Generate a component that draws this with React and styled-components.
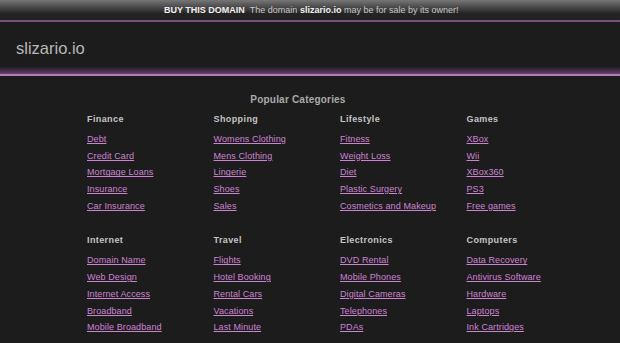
import React from 'react';
import styled, { createGlobalStyle } from 'styled-components';

const GlobalStyle = createGlobalStyle`
  html, body {
    margin: 0;
    padding: 0;
    background: #1c1c1c;
    font-family: "Liberation Sans", Arial, sans-serif;
  }
`;

const categories = [
  { title: 'Finance', links: ['Debt', 'Credit Card', 'Mortgage Loans', 'Insurance', 'Car Insurance'] },
  { title: 'Shopping', links: ['Womens Clothing', 'Mens Clothing', 'Lingerie', 'Shoes', 'Sales'] },
  { title: 'Lifestyle', links: ['Fitness', 'Weight Loss', 'Diet', 'Plastic Surgery', 'Cosmetics and Makeup'] },
  { title: 'Games', links: ['XBox', 'Wii', 'XBox360', 'PS3', 'Free games'] },
  { title: 'Internet', links: ['Domain Name', 'Web Design', 'Internet Access', 'Broadband', 'Mobile Broadband'] },
  { title: 'Travel', links: ['Flights', 'Hotel Booking', 'Rental Cars', 'Vacations', 'Last Minute'] },
  { title: 'Electronics', links: ['DVD Rental', 'Mobile Phones', 'Digital Cameras', 'Telephones', 'PDAs'] },
  { title: 'Computers', links: ['Data Recovery', 'Antivirus Software', 'Hardware', 'Laptops', 'Ink Cartridges'] }
];

export default function App () {
  return (
    <Page>
      <GlobalStyle />
      <TopBar>
        <Strong>BUY THIS DOMAIN</Strong>
        <Notice>The domain <b>slizario.io</b> may be for sale by its owner!</Notice>
      </TopBar>
      <Header>
        <Logo>slizario.io</Logo>
      </Header>
      <HeaderShade />
      <Main>
        <Title>Popular Categories</Title>
        <Grid>
          {
            categories.map((cat, index) => (
              <Column key={index} second={index >= 4}>
                <Heading>{ cat.title }</Heading>
                <List>
                  { cat.links.map(link => (
                    <li key={link}><Link href="#">{ link }</Link></li>
                  )) }
                </List>
              </Column>
            ))
          }
        </Grid>
      </Main>
    </Page>
  );
}

const Page = styled.div`
  width: 620px;
  min-height: 343px;
  background: #1c1c1c;
`;

const TopBar = styled.div`
  height: 20px;
  display: flex;
  align-items: center;
  padding-left: 164px;
  gap: 5px;
  font-size: 9px;
  background: linear-gradient(to bottom, #767676 0px, #4a4a4a 7px, #363236 11px, #242424 13px, #222 20px);
  border-bottom: 2px solid #7b4f80;
`;

const Strong = styled.span`
  color: #f0f0f0;
  font-weight: bold;
`;

const Notice = styled.span`
  color: #c8c8c8;

  b {
    color: #f0f0f0;
  }
`;

const Header = styled.div`
  height: 44px;
  display: flex;
  align-items: center;
  padding-left: 16px;
`;

const Logo = styled.div`
  font-size: 16.5px;
  color: #b8b8b8;
  padding-top: 8px;
`;

const HeaderShade = styled.div`
  height: 8px;
  background: linear-gradient(to bottom, #1c1c1c 0px, #2e232f 2px, #4a304d 5px, #6a4270 8px);
  border-bottom: 2px solid #b57bbb;
`;

const Main = styled.div`
  padding-top: 17px;
`;

const Title = styled.div`
  text-align: center;
  padding-right: 24px;
  font-size: 10px;
  line-height: 14px;
  font-weight: bold;
  letter-spacing: 0.2px;
  color: #aaa;
  margin-bottom: 5px;
`;

const Grid = styled.div`
  display: grid;
  grid-template-columns: repeat(4, 126.5px);
  padding-left: 87px;
`;

const Column = styled.div`
  margin-top: ${props => props.second ? '21px' : '0'};
`;

const Heading = styled.div`
  font-size: 9px;
  line-height: 14px;
  font-weight: bold;
  letter-spacing: 0.4px;
  color: #c4c4c4;
  margin-bottom: 3px;
`;

const List = styled.ul`
  list-style-type: none;
  margin: 0;
  padding: 0;

  li {
    line-height: 16.7px;
    height: 16.7px;
  }
`;

const Link = styled.a`
  font-size: 9px;
  color: #cc84d2;
  text-decoration: underline;
  letter-spacing: 0.1px;
`;
